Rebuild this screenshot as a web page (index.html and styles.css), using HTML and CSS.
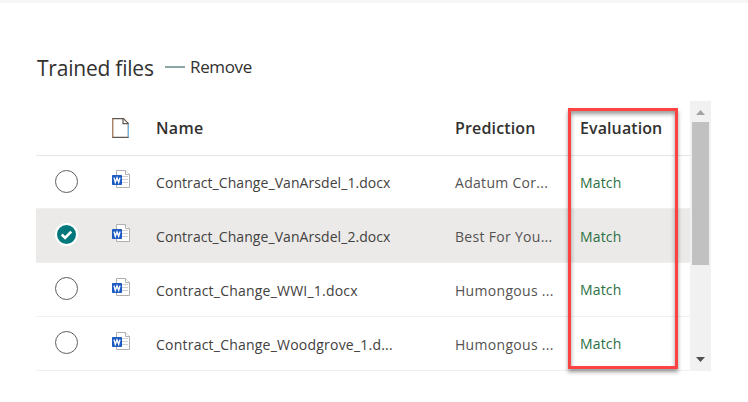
FILE: index.html
```
<!DOCTYPE html>
<html lang="en">
<head>
<meta charset="utf-8">
<title>Trained files</title>
<link rel="stylesheet" href="styles.css">
</head>
<body>
<svg class="defs" width="0" height="0">
  <symbol id="word" viewBox="0 0 20 20">
    <path d="M5.500 1.500h9l4 4v13h-13z" fill="#fff" stroke="#b0b0b0"/>
    <path d="M14.500 1.500v4h4" fill="#fff" stroke="#b0b0b0"/>
    <path d="M11 7.500h6M11 10.500h6M11 13.500h6" stroke="#d0d0d0"/>
    <rect x="1" y="6" width="10" height="10" rx=".7" fill="#1d5bc2"/>
    <path d="M3 8.600l1.300 4.700L6 9l1.700 4.300L9 8.600" fill="none" stroke="#fff" stroke-width="1.400"/>
  </symbol>
</svg>
<div class="topbar"></div>
<header class="toolbar">
  <h1>Trained files</h1>
  <button class="remove"><span class="minus"></span><span class="label">Remove</span></button>
</header>
<main class="panel">
  <div class="table">
    <div class="row head">
      <span></span>
      <svg class="page" viewBox="0 0 17 20"><path d="M.7 .6h10.800l4.800 4.800v14H.7z" fill="#fff" stroke="#605751" stroke-width="1.200"/><path d="M11 .6v5h5.300" fill="none" stroke="#605751" stroke-width="1.200"/><path d="M.6 .5v19" stroke="#b7865f"/><path d="M16.500 6v13.500" stroke="#70b5e3"/></svg>
      <span class="h-name">Name</span><span class="h-pred">Prediction</span><span class="h-eval">Evaluation</span>
    </div>
    <div class="row first">
      <span class="radio"></span><svg class="doc"><use href="#word"/></svg>
      <span class="name">Contract_Change_VanArsdel_1.docx</span><span class="pred">Adatum Cor...</span><span class="match">Match</span>
    </div>
    <div class="row selected">
      <span class="radio on"><svg viewBox="0 0 20 20"><path d="M5 10l3.500 3.500L15 7" fill="none" stroke="#fff" stroke-width="2.800"/></svg></span><svg class="doc"><use href="#word"/></svg>
      <span class="name">Contract_Change_VanArsdel_2.docx</span><span class="pred">Best For You...</span><span class="match">Match</span>
    </div>
    <div class="row">
      <span class="radio"></span><svg class="doc"><use href="#word"/></svg>
      <span class="name wide">Contract_Change_WWI_1.docx</span><span class="pred">Humongous ...</span><span class="match up">Match</span>
    </div>
    <div class="row">
      <span class="radio"></span><svg class="doc"><use href="#word"/></svg>
      <span class="name wide">Contract_Change_Woodgrove_1.d...</span><span class="pred">Humongous ...</span><span class="match up">Match</span>
    </div>
  </div>
  <div class="scrollbar">
    <svg class="arrow" viewBox="0 0 9 5"><path d="M0 5L4.500 0 9 5z" fill="#a3a3a3"/></svg>
    <div class="thumb"></div>
    <svg class="arrow down" viewBox="0 0 9 5"><path d="M0 0h9L4.500 5z" fill="#505050"/></svg>
  </div>
  <div class="highlight"></div>
</main>
</body>
</html>
```
FILE: styles.css
```
* { box-sizing: border-box; }
body {
  margin: 0;
  height: 402px;
  overflow: hidden;
  background: #fff;
  color: #323130;
  font-family: "Open Sans", "Noto Sans", sans-serif;
}
.defs { position: absolute; }
.topbar { height: 3px; background: #f7f6f5; }
.toolbar {
  display: flex;
  align-items: flex-start;
  height: 98px;
  padding: 51px 0 0 37px;
}
h1 {
  width: 128px;
  margin: 0;
  font-size: 21px;
  font-weight: 400;
  line-height: 28px;
  letter-spacing: -0.22px;
  white-space: nowrap;
}
.remove {
  display: flex;
  align-items: center;
  gap: 5px;
  padding: 0;
  border: 0;
  background: none;
  color: inherit;
  font: 17px/26px "Open Sans", "Noto Sans", sans-serif;
  letter-spacing: -0.35px;
}
.minus { width: 20px; height: 2px; margin-top: -1px; background: #8aa5a6; }
.panel {
  position: relative;
  display: flex;
  width: 675px;
  height: 270px;
  margin-left: 36px;
}
.table { width: 654px; }
.row {
  display: grid;
  grid-template-columns: 74px 46px 299px 125px 1fr;
  align-items: center;
  height: 54px;
  border-bottom: 1px solid #f1f0ef;
  font-size: 14px;
  line-height: 20px;
  white-space: nowrap;
}
.head {
  height: 55px;
  border-bottom-color: #e7e6e5;
  font-size: 16px;
  font-weight: 600;
}
.h-name { letter-spacing: 0.3px; }
.h-pred { letter-spacing: 0.15px; }
.h-eval { letter-spacing: 0.1px; }
.first { height: 53px; }
.selected { background: #ebeae8; }
.page { width: 17px; height: 20px; margin: -1px 0 0 2px; }
.radio {
  width: 23px;
  height: 23px;
  margin: -2px 0 0 19px;
  border: 1.5px solid #605e5c;
  border-radius: 50%;
  background: #fff;
}
.radio.on { border: 2px solid #fff; background: #03787c; }
.radio.on svg { display: block; width: 19px; height: 19px; }
.doc { width: 20px; height: 20px; margin: -6px 0 0 1px; }
.name { margin-top: 2px; color: #424140; letter-spacing: 0.07px; }
.wide { letter-spacing: 0.22px; }
.pred { margin-top: 2px; color: #555352; letter-spacing: 0.3px; }
.match { margin-top: 2px; color: #2b7043; letter-spacing: 0.15px; }
.up { margin-top: 0; }
.highlight {
  position: absolute;
  left: 532px;
  top: 7px;
  width: 110px;
  height: 261px;
  border: 3px solid #ff4343;
  box-shadow: 0 3px 4px rgba(0,0,0,.4), inset 0 3px 4px rgba(0,0,0,.4);
}
.scrollbar {
  display: flex;
  flex-direction: column;
  align-items: center;
  width: 21px;
  padding: 9px 0;
  background: #f1f1f1;
}
.arrow { width: 9px; height: 5px; }
.thumb { width: 17px; height: 143px; margin-top: 7px; background: #c1c1c1; }
.down { margin-top: auto; }
```
